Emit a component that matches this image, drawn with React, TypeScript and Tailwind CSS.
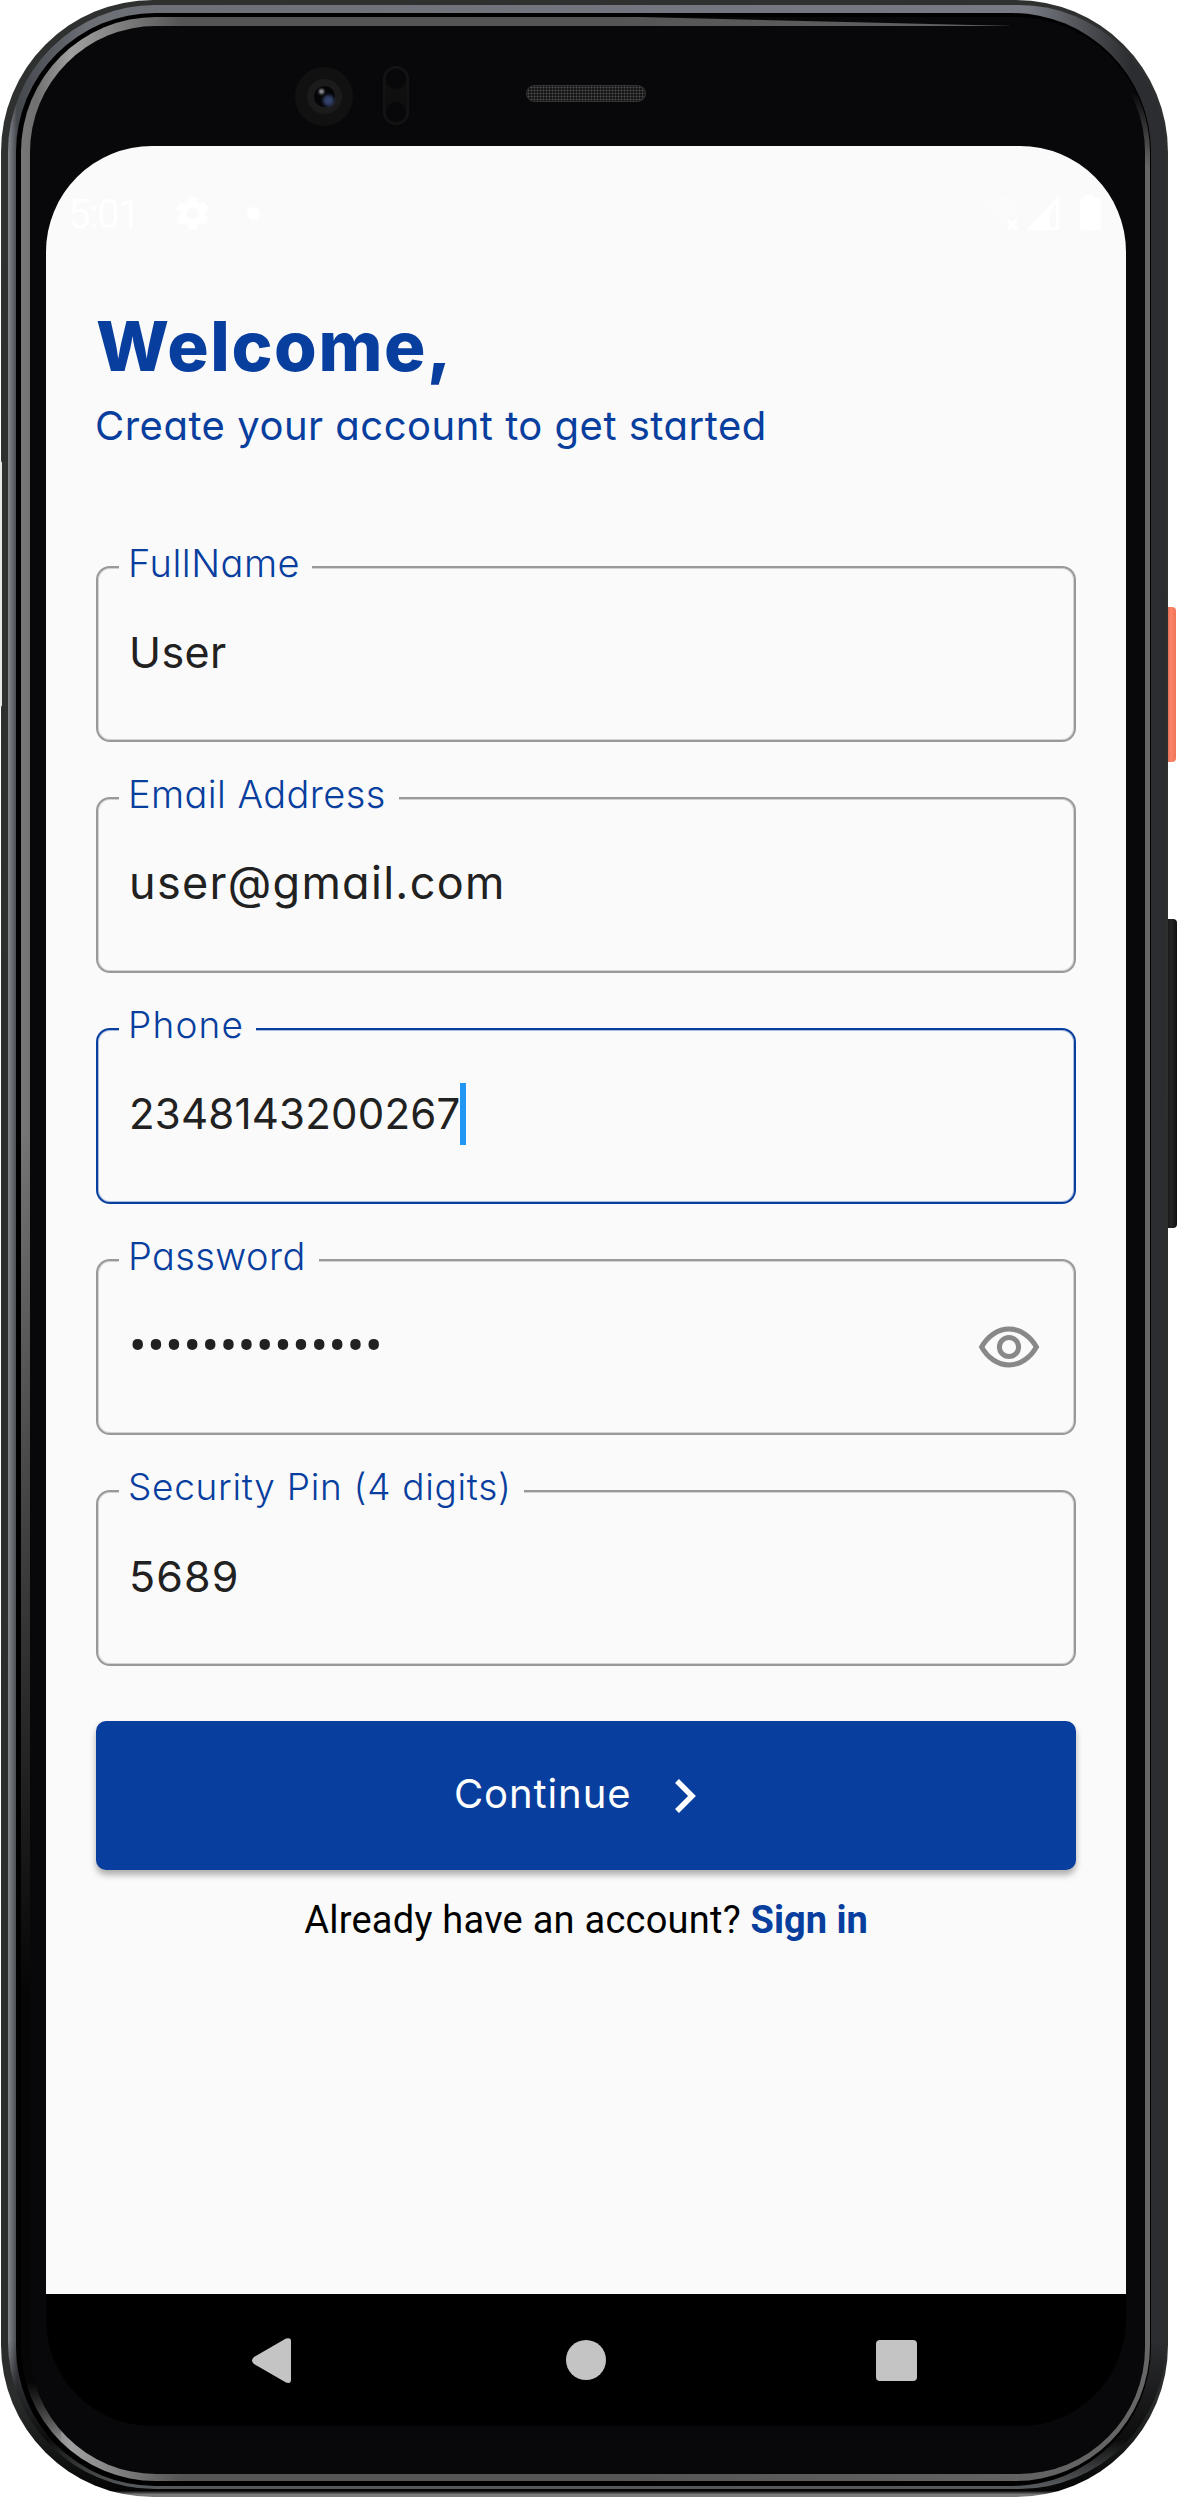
import type { ReactNode } from "react";

type FieldProps = {
  label: string;
  labelClass: string;
  value: string;
  valueClass: string;
  active?: boolean;
  trailing?: ReactNode;
};

function Field({ label, labelClass, value, valueClass, active = false, trailing }: FieldProps) {
  return (
    <div
      className={`relative flex h-[176px] items-center justify-between rounded-[14px] border-2 pl-[31px] pr-[34px] ${
        active
          ? "border-[#083e9e] shadow-[inset_0_0_0_1px_#a9bbdc]"
          : "border-[#999999] shadow-[inset_0_0_0_1px_#d2d2d2]"
      }`}
    >
      <label
        className={`absolute -top-[29px] left-[21px] h-12 whitespace-nowrap bg-[#fafafa] pl-[9px] font-light leading-[48px] text-[#083e9e] ${labelClass}`}
      >
        {label}
      </label>
      <div className="flex items-center">
        <span className={`whitespace-nowrap leading-[60px] text-[#212121] ${valueClass}`}>{value}</span>
        {active && <span className="-mt-[4px] h-[62px] w-[6px] bg-[#2196f3]" />}
      </div>
      {trailing}
    </div>
  );
}

function EyeIcon() {
  return (
    <svg width="62" height="44" viewBox="0 0 62 44" fill="none" stroke="#888888" strokeWidth="5">
      <path d="M3.6 22C9.5 11.5 19.5 4 31 4s21.500 7.500 27.400 18C52.500 32.500 42.500 40 31 40S9.500 32.500 3.600 22Z" />
      <circle cx="31" cy="22" r="9.600" />
    </svg>
  );
}

function GearIcon() {
  return (
    <svg width="41" height="41" viewBox="0 0 24 24" fill="#ffffff">
      <path d="M19.14 12.94c.04-.3.06-.61.06-.94s-.02-.64-.07-.94l2.030-1.580a.49.49 0 0 0 .12-.61l-1.920-3.320a.49.49 0 0 0-.59-.22l-2.390.96a7 7 0 0 0-1.620-.94l-.36-2.540a.48.48 0 0 0-.48-.41h-3.840a.48.48 0 0 0-.47.41l-.36 2.540c-.59.24-1.130.57-1.620.94l-2.390-.96a.49.49 0 0 0-.59.22L2.740 8.870a.48.48 0 0 0 .12.61l2.030 1.580c-.05.3-.09.63-.09.94s.02.64.07.94l-2.030 1.580a.49.49 0 0 0-.12.61l1.920 3.320c.12.22.37.29.59.22l2.390-.96c.5.38 1.030.7 1.620.94l.36 2.540c.05.24.24.41.48.41h3.840c.24 0 .44-.17.47-.41l.36-2.540a7 7 0 0 0 1.620-.94l2.390.96c.22.08.47 0 .59-.22l1.920-3.320a.48.48 0 0 0-.12-.61zM12 15.600a3.600 3.600 0 1 1 0-7.200 3.600 3.600 0 0 1 0 7.200z" />
    </svg>
  );
}

function StatusBar() {
  return (
    <div className="flex h-[134px] items-center justify-between pl-[22px] pr-[21px]">
      <div className="flex items-center">
        <span className="w-[80px] pt-[4px] font-[Roboto] text-[40px] leading-none tracking-[-1.500px] text-white">5:01</span>
        <div className="ml-[24px]">
          <GearIcon />
        </div>
        <span className="ml-[34px] size-[13px] rounded-full bg-white" />
      </div>
      <svg width="122" height="36" viewBox="0 0 122 36">
        <path d="M1 10Q20-6 38 10L31 19 22 21 20 33Z" fill="#fbfbfb" />
        <path d="M25 25l9 9M34 25l-9 9" stroke="#ffffff" strokeWidth="3.500" />
        <path d="M43 35 76 1v34z" fill="#ffffff" />
        <path d="M67 16l6-7v23h-6z" fill="#fafafa" />
        <path d="M102 0h9v3h4q3 0 3 3v26q0 3-3 3h-15q-3 0-3-3V6q0-3 3-3h2z" fill="#ffffff" />
      </svg>
    </div>
  );
}

function CameraBar() {
  return (
    <div className="relative h-[120px] w-full">
      <div className="absolute left-[249px] top-[41px] flex h-[59px] w-[58px] items-center justify-center rounded-full bg-[#111112]">
        <div className="flex size-[35px] items-center justify-center rounded-full bg-[#1b1b1c]">
          <div className="relative size-[21px] rounded-full bg-[#050508]">
            <span className="absolute left-[5px] top-[3px] size-[5px] rounded-full bg-[#9a9aa0] blur-[1px]" />
            <span className="absolute bottom-[1px] right-[1px] size-[11px] rounded-full bg-[#33426b] blur-[1.5px]" />
          </div>
        </div>
      </div>
      <div className="absolute left-[337px] top-[40px] flex h-[59px] w-[26px] flex-col items-center justify-between rounded-full border-2 border-[#141415] bg-[#0f0f10] py-px">
        <span className="size-[20px] rounded-full bg-[#08080a]" />
        <span className="size-[20px] rounded-full bg-[#08080a]" />
      </div>
      <div className="absolute left-[480px] top-[59px] h-[17px] w-[120px] rounded-full border border-[#333333] bg-[#161616] bg-[radial-gradient(circle,#4a4a4a_0.8px,transparent_1.2px)] bg-[size:3px_3px]" />
    </div>
  );
}

function SignUpForm() {
  return (
    <main className="px-[50px] pt-8 font-[Inter,sans-serif] [font-feature-settings:'cv11']">
      <h1 className="h-[70px] whitespace-nowrap text-[69px] font-extrabold leading-[69px] tracking-[1.6px] text-[#083e9e]">
        Welcome,
      </h1>
      <p className="mt-5 h-12 whitespace-nowrap text-[40px] leading-[48px] tracking-[0.500px] text-[#083e9e] -indent-[1px]">
        Create your account to get started
      </p>
      <form className="mt-[116px] flex flex-col gap-[55px]">
        <Field
          label="FullName"
          labelClass="text-[38px] tracking-[0.5px] pr-[12px]"
          value="User"
          valueClass="-mt-[4px] text-[43px] tracking-[0.4px]"
        />
        <Field
          label="Email Address"
          labelClass="text-[38px] tracking-[0.4px] pr-[13px]"
          value="user@gmail.com"
          valueClass="-mt-[4px] text-[45px] tracking-[1.3px]"
        />
        <Field
          label="Phone"
          labelClass="text-[37px] tracking-[1.200px] pr-[12px]"
          value="2348143200267"
          valueClass="-mt-[4px] text-[42px] tracking-[0.2px]"
          active
        />
        <Field
          label="Password"
          labelClass="text-[38px] tracking-[0.400px] pr-[13px]"
          value="••••••••••••••"
          valueClass="font-[Roboto] text-[52px] tracking-[0.600px]"
          trailing={<EyeIcon />}
        />
        <Field
          label="Security Pin (4 digits)"
          labelClass="text-[37px] tracking-[0.700px] pr-[12px]"
          value="5689"
          valueClass="-mt-[4px] text-[43px] tracking-[1.100px]"
        />
      </form>
      <button className="mt-[55px] flex h-[149px] w-full items-center rounded-[10px] bg-[#083e9e] pl-[358px] text-white shadow-[0_5px_6px_rgba(0,0,0,0.3)]">
        <span className="-mt-[3px] w-[200px] text-left text-[40px] leading-[48px] tracking-[0.900px]">Continue</span>
        <svg className="ml-[19px] mt-[1px]" width="26" height="36" viewBox="0 0 26 36" fill="none" stroke="#ffffff" strokeWidth="5.500">
          <path d="M4 3l15 15L4 33" />
        </svg>
      </button>
      <p className="mt-[26px] h-12 whitespace-nowrap text-center font-[Roboto] text-[38px] leading-[48px] tracking-[0.250px] text-black">
        Already have an account? <a className="font-bold tracking-[0px] text-[#083e9e]">Sign in</a>
      </p>
    </main>
  );
}

function NavBar() {
  return (
    <nav className="relative h-[132px] rounded-b-[106px] bg-black">
      <svg className="absolute left-[205px] top-[43px]" width="42" height="47" viewBox="0 0 42 47" fill="#c4c4c4">
        <path d="M3 20 35 1.600Q40 0 40 4V43Q40 47 35 45.500L3 27Q-1 23.500 3 20Z" />
      </svg>
      <span className="absolute left-[520px] top-[46px] size-[40px] rounded-full bg-[#c4c4c4]" />
      <span className="absolute left-[830px] top-[46px] size-[41px] rounded-[4px] bg-[#c4c4c4]" />
    </nav>
  );
}

export default function App() {
  return (
    <div className="relative h-[2498px] w-[1178px] overflow-hidden bg-white">
      <div className="absolute left-[1163px] top-[607px] h-[155px] w-[13px] rounded-r-[4px] bg-[linear-gradient(90deg,#b9513d,#fb8468_60%,#f27558)]" />
      <div className="absolute left-[1163px] top-[919px] h-[309px] w-[14px] rounded-r-[4px] bg-[linear-gradient(90deg,#0c0c0c,#252525_60%,#111)]" />
      <div className="relative ml-px h-[2497px] w-[1167px] rounded-[152px] bg-[linear-gradient(180deg,#2f3130,#2b2d2d_96%,#050505_99.75%,#7a7a7a_99.9%)] pb-[8px] pl-[7px] pr-[2px] pt-[5px]">
        <div className="h-full rounded-[147px] bg-[linear-gradient(180deg,transparent_94%,#0c0c0c_98%,#55585a_99.85%),linear-gradient(90deg,#85888f_0,#44474c_9px,#6c6f76_80px,#777a82_88%,#2c2d30_97%)] pb-[3px] pl-[8px] pr-[15px] pt-[8px]">
          <div className="h-full rounded-[139px] bg-black pb-[5px] pl-[5px] pr-px pt-[4px]">
            <div className="h-full rounded-[135px] bg-[linear-gradient(180deg,transparent_45%,#060606_80%,#060606_96%,transparent_98.5%),linear-gradient(180deg,#08080a_50%,transparent),linear-gradient(90deg,#777_0,#707070_15px,#a0a0a0_50px,#555_160px,#555_600px,#666_1120px)] bg-[size:40px_100%,140px_150px,100%_100%] bg-[position:left_top,right_top,left_top] bg-no-repeat pb-[7px] pl-[9px] pr-[5px] pt-[9px]">
              <div className="h-full rounded-[126px] bg-[#08080a] pl-[16px] pr-[19px]">
                <CameraBar />
                <div className="h-[2280px] w-[1080px] overflow-hidden rounded-[106px] bg-[#08080a]">
                  <div className="h-[2148px] bg-[#fafafa]">
                    <StatusBar />
                    <SignUpForm />
                  </div>
                  <NavBar />
                </div>
              </div>
            </div>
          </div>
        </div>
      </div>
      <div className="absolute left-[640px] top-[17px] h-[9px] w-[375px] bg-[#08080a] [clip-path:polygon(0_0,100%_0,100%_100%)]" />
      <div className="absolute left-0 top-[461px] h-[246px] w-[2px] rounded-r bg-[#e8e8e8]" />
    </div>
  );
}
